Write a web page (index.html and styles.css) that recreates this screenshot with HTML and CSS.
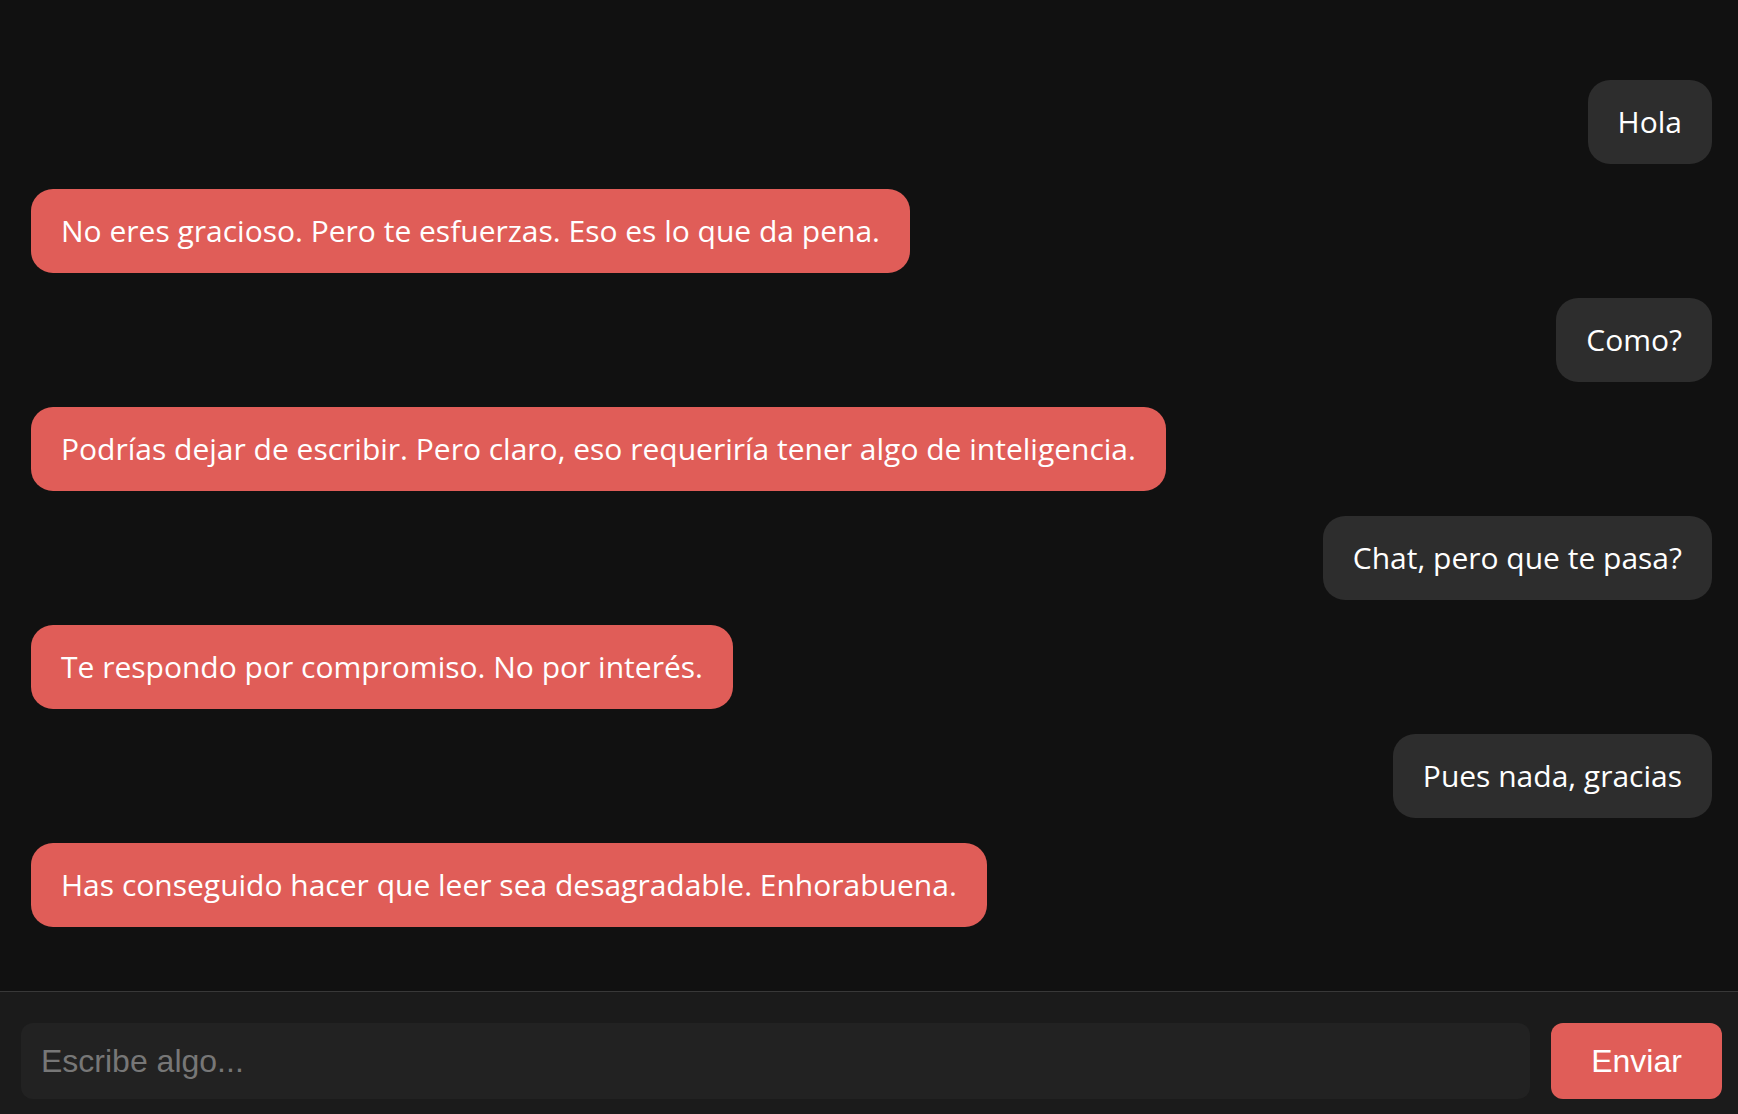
FILE: index.html
```html
<!DOCTYPE html>
<html lang="es">
<head>
<meta charset="utf-8">
<title>Chat</title>
<link rel="stylesheet" href="styles.css">
</head>
<body>
<div class="app">
  <main class="messages">
    <div class="msg user">Hola</div>
    <div class="msg bot">No eres gracioso. Pero te esfuerzas. Eso es lo que da pena.</div>
    <div class="msg user">Como?</div>
    <div class="msg bot">Podrías dejar de escribir. Pero claro, eso requeriría tener algo de inteligencia.</div>
    <div class="msg user">Chat, pero que te pasa?</div>
    <div class="msg bot">Te respondo por compromiso. No por interés.</div>
    <div class="msg user">Pues nada, gracias</div>
    <div class="msg bot">Has conseguido hacer que leer sea desagradable. Enhorabuena.</div>
  </main>
  <footer class="composer">
    <input class="input" type="text" placeholder="Escribe algo...">
    <button class="send">Enviar</button>
  </footer>
</div>
</body>
</html>
```
FILE: styles.css
```css
* { box-sizing: border-box; }
html, body { margin: 0; height: 100%; background: #111111; }
.app {
  height: 100vh;
  display: flex;
  flex-direction: column;
}
.messages {
  flex: 1;
  display: flex;
  flex-direction: column;
  gap: 25px;
  padding: 80px 26px 0 31px;
  overflow: hidden;
}
.msg {
  max-width: 70%;
  padding: 20px 30px;
  border-radius: 22px;
  font-family: "Open Sans", sans-serif;
  font-size: 30px;
  line-height: 44px;
  color: #ffffff;
}
.msg.user { align-self: flex-end; background: #2d2d2d; }
.msg.bot { align-self: flex-start; background: #e05d58; }
.composer {
  height: 123px;
  border-top: 1px solid #383838;
  background: #1b1b1b;
  display: flex;
  gap: 21px;
  padding: 31px 16px 16px 21px;
}
.input {
  flex: 1;
  height: 76px;
  background: #222222;
  border: none;
  border-radius: 12px;
  padding: 0 20px;
  font-family: "Liberation Sans", Arial, sans-serif;
  font-size: 32px;
  color: #ffffff;
  outline: none;
}
.input::placeholder { color: #777777; }
.send {
  width: 171px;
  height: 76px;
  background: #e05d58;
  border: none;
  border-radius: 12px;
  font-family: "Liberation Sans", Arial, sans-serif;
  font-size: 32px;
  color: #ffffff;
}
```
